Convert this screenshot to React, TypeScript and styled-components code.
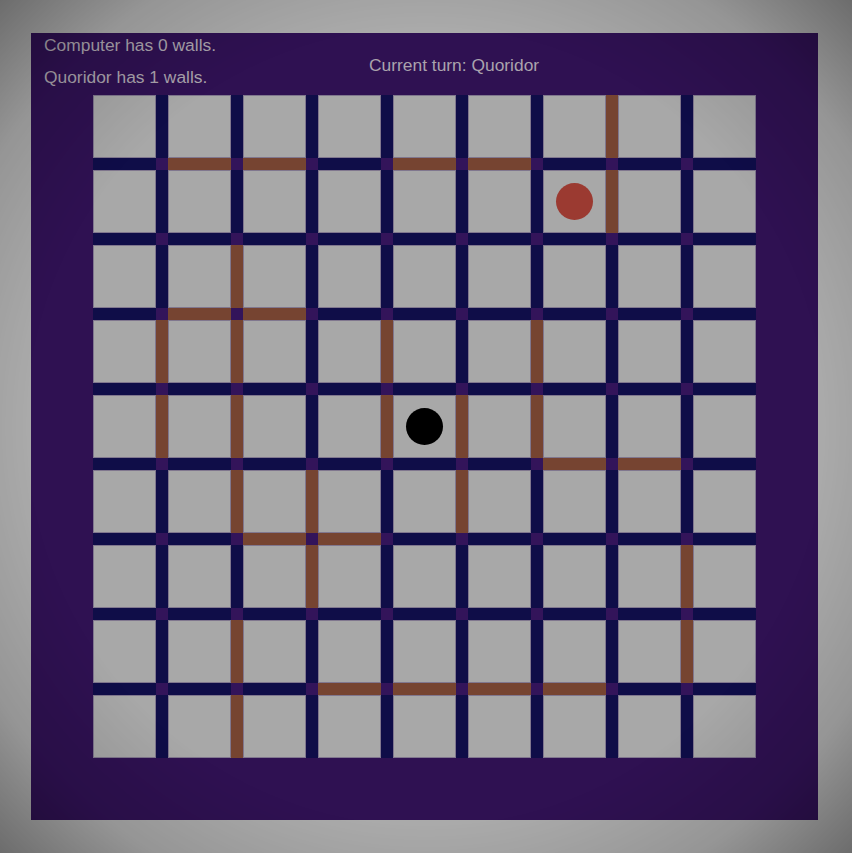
import styled, { createGlobalStyle } from 'styled-components';

const GlobalStyle = createGlobalStyle`
  html, body {
    margin: 0;
    padding: 0;
    background: #aaaaaa;
    font-family: "Liberation Sans", Arial, sans-serif;
  }
`;

const CELL = 63;
const GAP = 12;
const SIZE = 9;

// walls below row r, on column c
const hWalls = new Set([
  '0-1', '0-2', '0-4', '0-5',
  '2-1', '2-2',
  '4-6', '4-7',
  '5-2', '5-3',
  '7-3', '7-4', '7-5', '7-6',
]);

// walls right of column c, on row r
const vWalls = new Set([
  '0-3', '0-4',
  '1-2', '1-3', '1-4', '1-5', '1-7', '1-8',
  '2-5', '2-6',
  '3-3', '3-4',
  '4-4', '4-5',
  '5-3', '5-4',
  '6-0', '6-1',
  '7-6', '7-7',
]);

const pawns: { row: number; col: number; color: string }[] = [
  { row: 1, col: 6, color: '#9b3a31' },
  { row: 4, col: 4, color: '#000000' },
];

const Screen = styled.div`
  width: 852px;
  height: 853px;
  padding: 33px 0 0 31px;
  box-sizing: border-box;
`;

const Panel = styled.div`
  width: 787px;
  height: 787px;
  background: #2f1152;
  display: flex;
  flex-direction: column;
`;

const Header = styled.div`
  height: 62px;
  display: grid;
  grid-template-columns: 325px auto;
  padding-left: 13px;
  color: #aaa3ad;
  font-size: 17.4px;
`;

const Stats = styled.div`
  display: flex;
  flex-direction: column;
  gap: 11.5px;
  padding-top: 2.4px;
`;

const Line = styled.div`
  line-height: 20px;
`;

const Turn = styled.div`
  line-height: 20px;
  padding-top: 21.7px;
`;

const Board = styled.div`
  margin: 0 62px;
  display: grid;
  grid-template-columns: repeat(${SIZE - 1}, ${CELL}px ${GAP}px) ${CELL}px;
  grid-template-rows: repeat(${SIZE - 1}, ${CELL}px ${GAP}px) ${CELL}px;
`;

const Cell = styled.div`
  box-sizing: border-box;
  background: #a8a8a8;
  border: 1px solid rgba(80, 60, 110, 0.45);
  display: flex;
  align-items: center;
  justify-content: center;
`;

const Groove = styled.div<{ $wall: boolean }>`
  background: ${(p) => (p.$wall ? '#764431' : '#0f0d48')};
`;

const Joint = styled.div`
  background: #33145a;
`;

const Pawn = styled.div<{ $color: string }>`
  width: 37px;
  height: 37px;
  border-radius: 50%;
  background: ${(p) => p.$color};
`;

const Vignette = styled.div`
  position: fixed;
  inset: 0;
  pointer-events: none;
  background: radial-gradient(
    circle farthest-corner at center,
    rgba(0, 0, 0, 0) 66%,
    rgba(0, 0, 0, 0.12) 84%,
    rgba(0, 0, 0, 0.36) 100%
  );
`;

const App = () => {
  const items = [];
  for (let gy = 0; gy < SIZE * 2 - 1; gy++) {
    for (let gx = 0; gx < SIZE * 2 - 1; gx++) {
      const key = `${gy}-${gx}`;
      const r = Math.floor(gy / 2);
      const c = Math.floor(gx / 2);
      if (gy % 2 === 0 && gx % 2 === 0) {
        const pawn = pawns.find((p) => p.row === r && p.col === c);
        items.push(
          <Cell key={key}>{pawn && <Pawn $color={pawn.color} />}</Cell>
        );
      } else if (gy % 2 === 1 && gx % 2 === 0) {
        items.push(<Groove key={key} $wall={hWalls.has(`${r}-${c}`)} />);
      } else if (gy % 2 === 0 && gx % 2 === 1) {
        items.push(<Groove key={key} $wall={vWalls.has(`${c}-${r}`)} />);
      } else {
        items.push(<Joint key={key} />);
      }
    }
  }

  return (
    <>
      <GlobalStyle />
      <Screen>
        <Panel>
          <Header>
            <Stats>
              <Line>Computer has 0 walls.</Line>
              <Line>Quoridor has 1 walls.</Line>
            </Stats>
            <Turn>Current turn: Quoridor</Turn>
          </Header>
          <Board>{items}</Board>
        </Panel>
      </Screen>
      <Vignette />
    </>
  );
};

export default App;
